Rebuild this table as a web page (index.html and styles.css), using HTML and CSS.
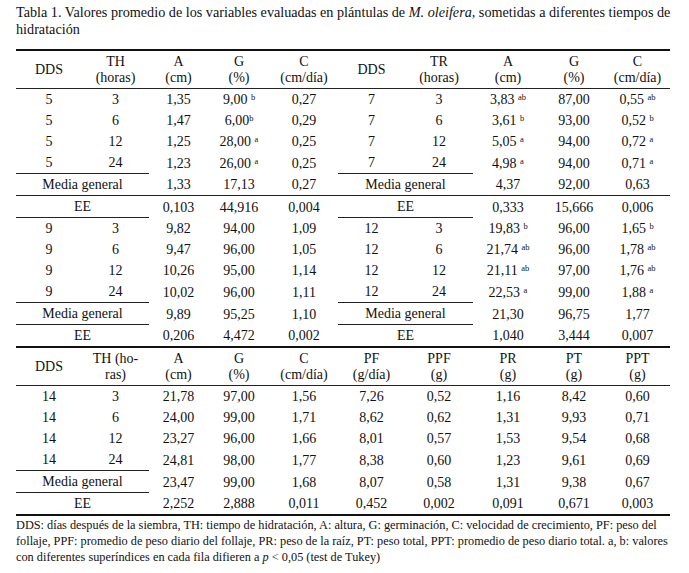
FILE: index.html
```html
<!DOCTYPE html>
<html lang="es">
<head>
<meta charset="utf-8">
<title>Tabla 1</title>
<link rel="stylesheet" href="styles.css">
</head>
<body>
<div class="page">
  <p class="caption">Tabla 1. Valores promedio de los variables evaluadas en plántulas de <i>M. oleifera,</i> sometidas a diferentes tiempos de<br>hidratación</p>
  <table class="data">
    <colgroup>
      <col class="c1"><col class="c2"><col class="c3"><col class="c4"><col class="c5">
      <col class="c6"><col class="c7"><col class="c8"><col class="c9"><col class="c10">
    </colgroup>
    <tbody>
      <tr class="hd top">
        <td>DDS</td><td>TH<br>(horas)</td><td>A<br>(cm)</td><td>G<br>(%)</td><td>C<br>(cm/día)</td>
        <td>DDS</td><td>TR<br>(horas)</td><td>A<br>(cm)</td><td>G<br>(%)</td><td>C<br>(cm/día)</td>
      </tr>
      <tr><td>5</td><td>3</td><td>1,35</td><td>9,00 <sup>b</sup></td><td>0,27</td><td>7</td><td>3</td><td>3,83 <sup>ab</sup></td><td>87,00</td><td>0,55 <sup>ab</sup></td></tr>
      <tr><td>5</td><td>6</td><td>1,47</td><td>6,00<sup>b</sup></td><td>0,29</td><td>7</td><td>6</td><td>3,61 <sup>b</sup></td><td>93,00</td><td>0,52 <sup>b</sup></td></tr>
      <tr><td>5</td><td>12</td><td>1,25</td><td>28,00 <sup>a</sup></td><td>0,25</td><td>7</td><td>12</td><td>5,05 <sup>a</sup></td><td>94,00</td><td>0,72 <sup>a</sup></td></tr>
      <tr><td class="pl">5</td><td class="pl">24</td><td>1,23</td><td>26,00 <sup>a</sup></td><td>0,25</td><td class="pl">7</td><td class="pl">24</td><td>4,98 <sup>a</sup></td><td>94,00</td><td>0,71 <sup>a</sup></td></tr>
      <tr class="fl"><td colspan="2">Media general</td><td>1,33</td><td>17,13</td><td>0,27</td><td colspan="2">Media general</td><td>4,37</td><td>92,00</td><td>0,63</td></tr>
      <tr><td colspan="2" class="pl">EE</td><td>0,103</td><td>44,916</td><td>0,004</td><td colspan="2" class="pl">EE</td><td>0,333</td><td>15,666</td><td>0,006</td></tr>
      <tr><td>9</td><td>3</td><td>9,82</td><td>94,00</td><td>1,09</td><td>12</td><td>3</td><td>19,83 <sup>b</sup></td><td>96,00</td><td>1,65 <sup>b</sup></td></tr>
      <tr><td>9</td><td>6</td><td>9,47</td><td>96,00</td><td>1,05</td><td>12</td><td>6</td><td>21,74 <sup>ab</sup></td><td>96,00</td><td>1,78 <sup>ab</sup></td></tr>
      <tr><td>9</td><td>12</td><td>10,26</td><td>95,00</td><td>1,14</td><td>12</td><td>12</td><td>21,11 <sup>ab</sup></td><td>97,00</td><td>1,76 <sup>ab</sup></td></tr>
      <tr><td class="pl">9</td><td class="pl">24</td><td>10,02</td><td>96,00</td><td>1,11</td><td class="pl">12</td><td class="pl">24</td><td>22,53 <sup>a</sup></td><td>99,00</td><td>1,88 <sup>a</sup></td></tr>
      <tr><td colspan="2" class="pl">Media general</td><td>9,89</td><td>95,25</td><td>1,10</td><td colspan="2" class="pl">Media general</td><td>21,30</td><td>96,75</td><td>1,77</td></tr>
      <tr class="tk"><td colspan="2">EE</td><td>0,206</td><td>4,472</td><td>0,002</td><td colspan="2">EE</td><td>1,040</td><td>3,444</td><td>0,007</td></tr>
      <tr class="hd">
        <td>DDS</td><td>TH (ho-<br>ras)</td><td>A<br>(cm)</td><td>G<br>(%)</td><td>C<br>(cm/día)</td>
        <td>PF<br>(g/día)</td><td>PPF<br>(g)</td><td>PR<br>(g)</td><td>PT<br>(g)</td><td>PPT<br>(g)</td>
      </tr>
      <tr><td>14</td><td>3</td><td>21,78</td><td>97,00</td><td>1,56</td><td>7,26</td><td>0,52</td><td>1,16</td><td>8,42</td><td>0,60</td></tr>
      <tr><td>14</td><td>6</td><td>24,00</td><td>99,00</td><td>1,71</td><td>8,62</td><td>0,62</td><td>1,31</td><td>9,93</td><td>0,71</td></tr>
      <tr><td>14</td><td>12</td><td>23,27</td><td>96,00</td><td>1,66</td><td>8,01</td><td>0,57</td><td>1,53</td><td>9,54</td><td>0,68</td></tr>
      <tr><td class="pl">14</td><td class="pl">24</td><td>24,81</td><td>98,00</td><td>1,77</td><td>8,38</td><td>0,60</td><td>1,23</td><td>9,61</td><td>0,69</td></tr>
      <tr><td colspan="2" class="pl">Media general</td><td>23,47</td><td>99,00</td><td>1,68</td><td>8,07</td><td>0,58</td><td>1,31</td><td>9,38</td><td>0,67</td></tr>
      <tr class="tk"><td colspan="2">EE</td><td>2,252</td><td>2,888</td><td>0,011</td><td>0,452</td><td>0,002</td><td>0,091</td><td>0,671</td><td>0,003</td></tr>
    </tbody>
  </table>
  <p class="note">DDS: días después de la siembra, TH: tiempo de hidratación, A: altura, G: germinación, C: velocidad de crecimiento, PF: peso del<br>follaje, PPF: promedio de peso diario del follaje, PR: peso de la raíz, PT: peso total, PPT: promedio de peso diario total. a, b: valores<br>con diferentes superíndices en cada fila difieren a <i>p</i> &lt; 0,05 (test de Tukey)</p>
</div>
</body>
</html>
```
FILE: styles.css
```css
html, body {
  margin: 0;
  padding: 0;
  background: #fff;
}
body {
  font-family: "Liberation Serif", "Times New Roman", serif;
  color: #111;
}
.page {
  padding: 4px 0 0 16px;
  width: 660px;
}
.caption {
  margin: 0 0 11px 0;
  font-family: "Liberation Serif", serif;
  font-size: 14.2px;
  line-height: 17px;
  white-space: nowrap;
}
.data {
  border-collapse: separate;
  border-spacing: 0;
  table-layout: fixed;
  width: 654px;
  font-family: "Liberation Serif", serif;
  font-size: 14px;
}
.c1 { width: 66px; }
.c2 { width: 67px; }
.c3 { width: 59px; }
.c4 { width: 62px; }
.c5 { width: 68px; }
.c6 { width: 67px; }
.c7 { width: 68px; }
.c8 { width: 70px; }
.c9 { width: 62px; }
.c10 { width: 65px; }
.data td {
  padding: 0;
  height: 21px;
  line-height: 21px;
  text-align: center;
  vertical-align: middle;
  white-space: nowrap;
  font-family: "Liberation Serif", serif;
}
.data tr.hd td {
  height: 37px;
  line-height: 16px;
  border-bottom: 1px solid #222;
}
.data tr.top td {
  border-top: 2px solid #111;
}
.data td.pl,
.data tr.fl td {
  border-bottom: 1px solid #222;
}
.data tr.tk td {
  border-bottom: 2px solid #111;
}
.data sup {
  font-size: 8.5px;
  line-height: 0;
  vertical-align: 4px;
}
.note {
  margin: 1px 0 0 0;
  font-family: "Liberation Serif", serif;
  font-size: 12.3px;
  line-height: 16px;
  white-space: nowrap;
}
```
